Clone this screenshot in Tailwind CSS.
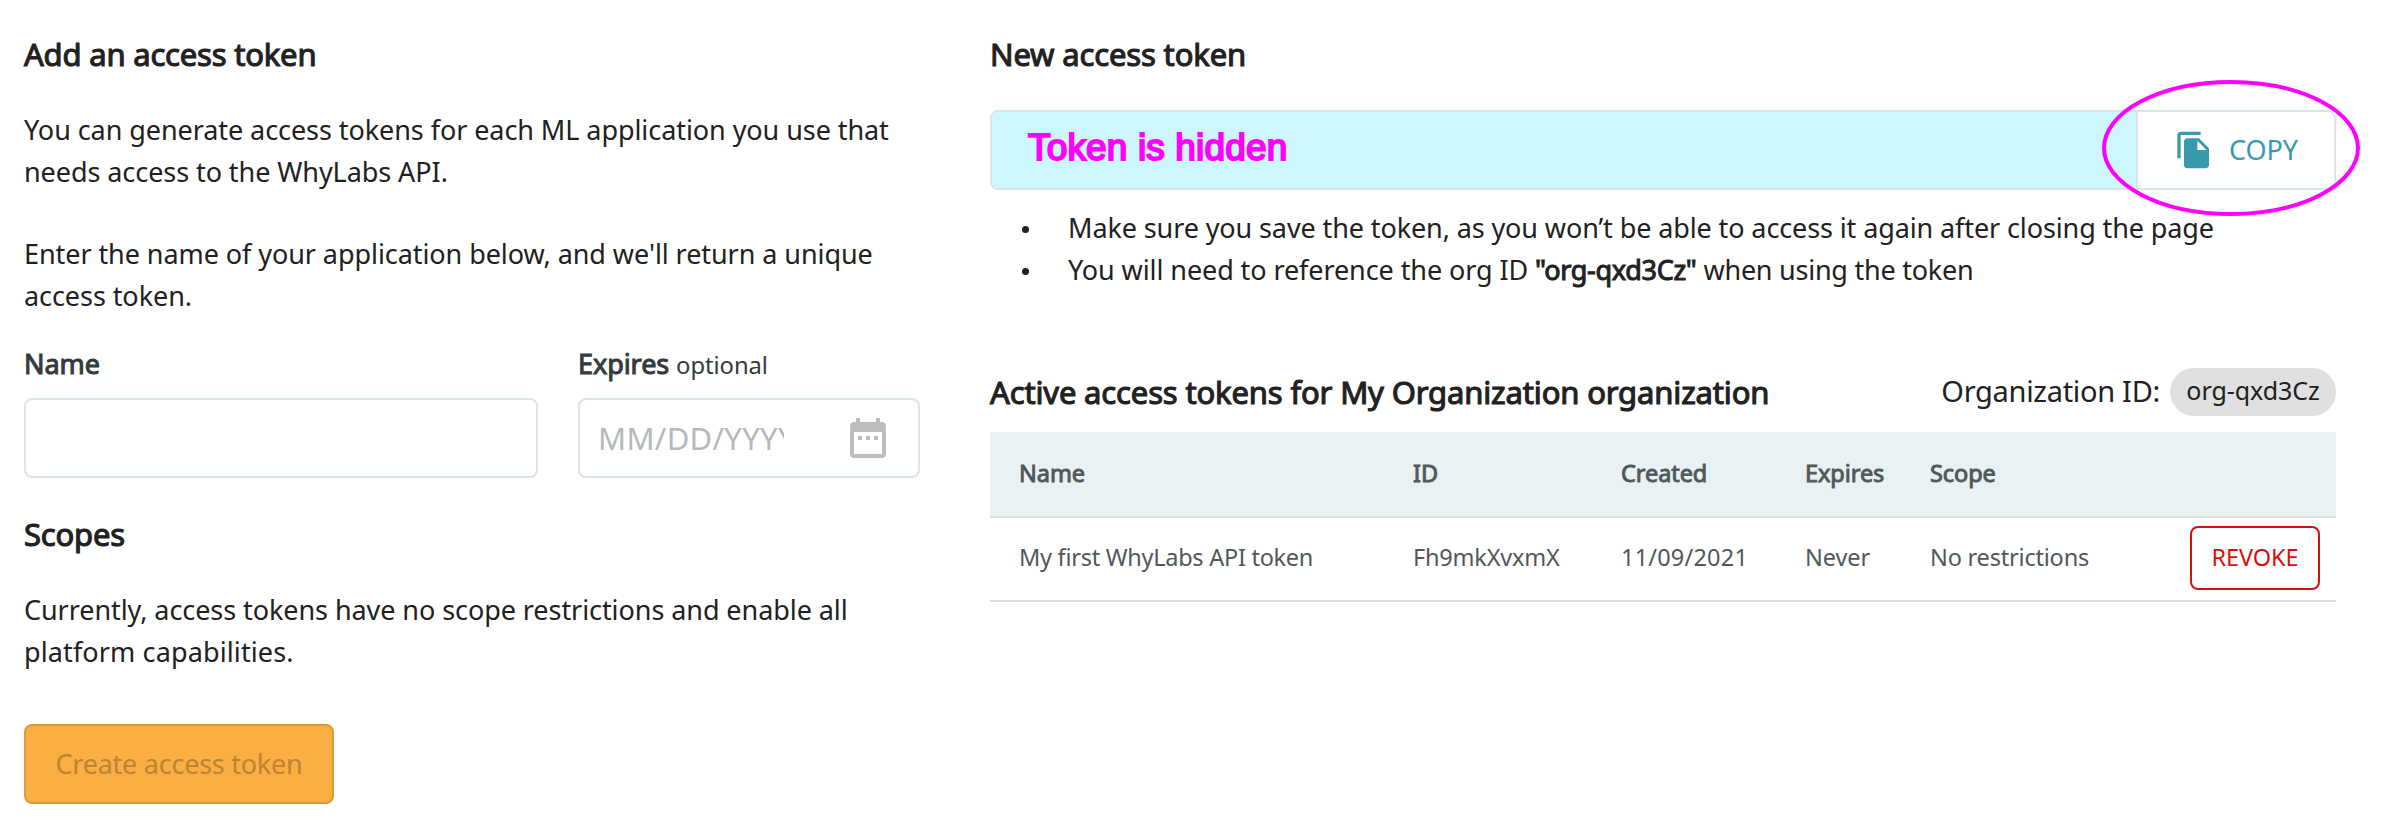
<!DOCTYPE html>
<html lang="en">
<head>
  <meta charset="UTF-8">
  <meta name="viewport" content="width=device-width, initial-scale=1.0">
  <title>Access Tokens</title>
  <script src="https://cdn.jsdelivr.net/npm/@tailwindcss/browser@4"></script>
</head>
<body class="bg-white min-h-screen overflow-hidden font-['Noto_Sans',sans-serif] text-[27px] leading-[42px] tracking-[-0.07px] text-[#212121]">
  <main class="flex gap-[70px] pt-[33px] pl-6 pr-12">

    <!-- Create token form -->
    <section class="w-[896px] shrink-0">
      <h2 class="text-[31px] leading-[42px] tracking-[-0.2px] [-webkit-text-stroke:1.1px_#212121]">Add an access token</h2>
      <p class="mt-[34px]">You can generate access tokens for each ML application you use that<br>needs access to the WhyLabs API.</p>
      <p class="mt-10">Enter the name of your application below, and we'll return a unique<br>access token.</p>

      <div class="mt-[31px] flex gap-10 text-[#313b3d]">
        <div class="w-[514px]">
          <label for="name" class="block h-8 leading-8 [-webkit-text-stroke:1px_#313b3d]">Name</label>
          <input id="name" type="text" class="mt-[18px] block w-full h-20 px-5 border-2 border-[#dbe5e7] rounded-lg outline-none">
        </div>
        <div class="w-[342px]">
          <label for="expires" class="block h-8 leading-8"><span class="[-webkit-text-stroke:1px_#313b3d]">Expires</span> <span class="text-[23.8px]">optional</span></label>
          <div class="mt-[18px] flex items-center h-20 pl-[18px] pr-[26px] border-2 border-[#dbe5e7] rounded-lg">
            <input id="expires" type="text" placeholder="MM/DD/YYYY" class="w-[186px] text-[31px] tracking-[0.3px] placeholder-[#b5b9b9] outline-none">
            <svg class="ml-auto size-12" viewBox="0 0 24 24" fill="#bdbdbd"><path d="M9 11H7v2h2v-2zm4 0h-2v2h2v-2zm4 0h-2v2h2v-2zm2-7h-1V2h-2v2H8V2H6v2H5c-1.11 0-1.99.9-1.99 2L3 20c0 1.1.89 2 2 2h14c1.1 0 2-.9 2-2V6c0-1.1-.9-2-2-2zm0 16H5V9h14v11z"/></svg>
          </div>
        </div>
      </div>

      <h2 class="mt-[35px] text-[31px] leading-[42px] tracking-[-0.2px] [-webkit-text-stroke:1.1px_#212121]">Scopes</h2>
      <p class="mt-[34px]">Currently, access tokens have no scope restrictions and enable all<br><span class="tracking-[0.12px]">platform capabilities.</span></p>
      <button class="mt-[51px] block w-[310px] h-20 border-2 border-[#dd9a37] rounded-lg bg-[#fbae42] text-[#bd8433] tracking-[-0.25px]">Create access token</button>
    </section>

    <!-- Tokens -->
    <section class="w-[1346px] shrink-0">
      <h2 class="text-[31px] leading-[42px] tracking-[-0.15px] [-webkit-text-stroke:1.1px_#212121]">New access token</h2>

      <div class="relative mt-[35px] flex h-20 border-2 border-[#dbe5e7] rounded-lg">
        <div class="flex-1 pl-9 rounded-l-md bg-[#cdf7ff] font-['Liberation_Sans',sans-serif] text-[37px] leading-[71px] tracking-[0.15px] text-[#ff00ff] [-webkit-text-stroke:2px_#ff00ff]">Token is hidden</div>
        <button class="flex items-center w-[198px] pl-9 border-l-2 border-[#dbe5e7] text-[#369bac]">
          <svg class="size-10" viewBox="0 0 24 24" fill="currentColor"><path d="M16 1H4c-1.1 0-2 .9-2 2v14h2V3h12V1zm-1 4l6 6v10c0 1.1-.9 2-2 2H7.99C6.89 23 6 22.1 6 21l.01-14c0-1.1.89-2 1.99-2h7zm-1 7h5.5L14 6.5V12z"/></svg>
          <span class="ml-[15px]">COPY</span>
        </button>
        <!-- Highlight ring -->
        <svg class="absolute -top-8 left-[1110px] w-[258px] h-[136px]" viewBox="0 0 258 136" fill="none"><ellipse cx="129" cy="68" rx="127" ry="66" stroke="#ff00ff" stroke-width="4"/></svg>
      </div>

      <ul class="mt-[17px]">
        <li class="flex items-center tracking-[-0.11px]"><span class="ml-8 mr-[39px] mt-0.5 size-[7px] rounded-full bg-[#212121]"></span>Make sure you save the token, as you won’t be able to access it again after closing the page</li>
        <li class="flex items-center tracking-[-0.09px]"><span class="ml-8 mr-[39px] mt-0.5 size-[7px] rounded-full bg-[#212121]"></span><span>You will need to reference the org ID <span class="tracking-[-0.3px] [-webkit-text-stroke:1px_#212121]">"org-qxd3Cz"</span> <span class="tracking-[-0.25px]">when using the token</span></span></li>
      </ul>

      <div class="mt-[77px] flex h-12">
        <h2 class="text-[31px] leading-[48px] tracking-[-0.15px] [-webkit-text-stroke:1.1px_#212121]">Active access tokens for My Organization organization</h2>
        <span class="ml-auto mr-[10px] text-[29px] leading-[46px] tracking-[-0.3px]">Organization ID:</span>
        <span class="w-[166px] rounded-full bg-[#e0e0e0] text-center text-[25px] leading-[45px]">org-qxd3Cz</span>
      </div>

      <div class="mt-4 text-[23.5px] text-[#4f585a]">
        <div class="grid grid-cols-[394px_208px_184px_125px_260px_130px] items-center h-[86px] pl-[29px] pb-[3px] border-b-2 border-[#dddfdf] bg-[#e9f1f3] [-webkit-text-stroke:0.9px_#4f585a]">
          <span>Name</span>
          <span>ID</span>
          <span>Created</span>
          <span>Expires</span>
          <span>Scope</span>
        </div>
        <div class="grid grid-cols-[394px_208px_184px_125px_260px_130px] items-center h-[84px] pl-[29px] pb-0.5 border-b-2 border-[#dddfdf]">
          <span class="pb-0.5 tracking-[-0.27px]">My first WhyLabs API token</span>
          <span class="pb-0.5 tracking-[-0.2px]">Fh9mkXvxmX</span>
          <span class="pb-0.5 tracking-[0.2px]">11/09/2021</span>
          <span class="pb-0.5">Never</span>
          <span class="pb-0.5 tracking-[-0.2px]">No restrictions</span>
          <button class="h-16 pb-0.5 border-2 border-[#d6100f] rounded-lg text-[#d6100f]">REVOKE</button>
        </div>
      </div>
    </section>

  </main>
</body>
</html>
